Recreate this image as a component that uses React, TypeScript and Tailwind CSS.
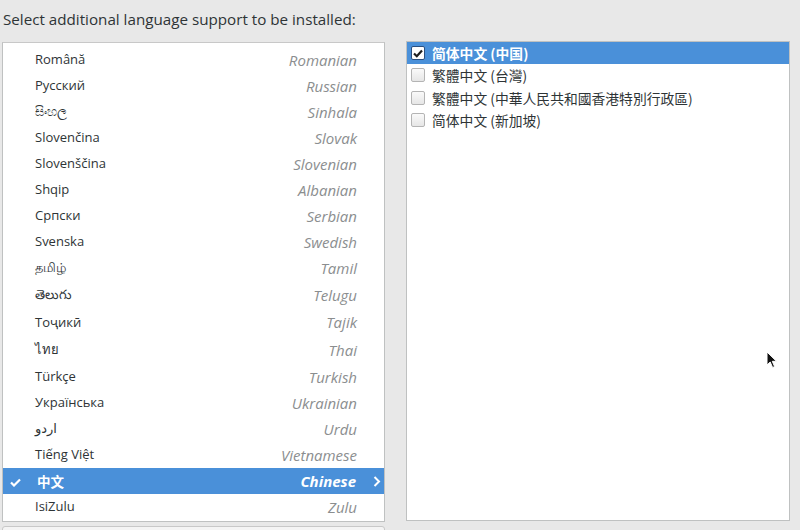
import React from "react";

type Lang = { native: string; en: string; h?: number; selected?: boolean };

const langs: Lang[] = [
  { native: "Română", en: "Romanian" },
  { native: "Русский", en: "Russian" },
  { native: "සිංහල", en: "Sinhala" },
  { native: "Slovenčina", en: "Slovak" },
  { native: "Slovenščina", en: "Slovenian" },
  { native: "Shqip", en: "Albanian" },
  { native: "Српски", en: "Serbian" },
  { native: "Svenska", en: "Swedish" },
  { native: "தமிழ்", en: "Tamil" },
  { native: "తెలుగు", en: "Telugu", h: 28 },
  { native: "Тоҷикӣ", en: "Tajik", h: 27 },
  { native: "ไทย", en: "Thai", h: 28 },
  { native: "Türkçe", en: "Turkish" },
  { native: "Українська", en: "Ukrainian" },
  { native: "اردو", en: "Urdu" },
  { native: "Tiếng Việt", en: "Vietnamese" },
  { native: "中文", en: "Chinese", selected: true },
  { native: "IsiZulu", en: "Zulu" },
];

const locales = [
  { t: "简体中文 (中国)", checked: true },
  { t: "繁體中文 (台灣)", checked: false },
  { t: "繁體中文 (中華人民共和國香港特別行政區)", checked: false },
  { t: "简体中文 (新加坡)", checked: false },
];

const FONT = "font-['Open_Sans','Noto_Sans','DejaVu_Sans','Noto_Sans_CJK_SC',sans-serif]";

function LangRow({ l }: { l: Lang }) {
  const h = l.h ?? 26;
  if (l.selected) {
    return (
      <div
        className="relative flex items-center bg-[#4a90d9] text-white"
        style={{ height: h }}
      >
        <svg className="absolute left-[7px] top-[10px]" width="11" height="9" viewBox="0 0 11 9">
          <path d="M1 4.5 L4 7.5 L10 1.5" fill="none" stroke="white" strokeWidth="2.2" />
        </svg>
        <span className="pl-[34px] text-[13.5px] font-bold font-['Noto_Sans_CJK_SC',sans-serif]">{l.native}</span>
        <span className="ml-auto pr-[28px] text-[15px] italic font-bold">{l.en}</span>
        <svg className="absolute right-[3px] top-[8px]" width="8" height="11" viewBox="0 0 8 11">
          <path d="M1.5 1 L6 5.5 L1.5 10" fill="none" stroke="white" strokeWidth="2" />
        </svg>
      </div>
    );
  }
  return (
    <div className="flex items-center" style={{ height: h }}>
      <span className="pl-[32px] text-[13px] text-[#2e3436]">{l.native}</span>
      <span className="ml-auto pr-[27px] text-[15px] italic text-[#8b8e8f]">{l.en}</span>
    </div>
  );
}

function Checkbox({ checked }: { checked: boolean }) {
  if (checked) {
    return (
      <div className="w-[14px] h-[14px] rounded-[2px] border border-[#2a4f80] bg-white flex items-center justify-center">
        <svg width="10" height="9" viewBox="0 0 10 9">
          <path d="M1 4.5 L3.8 7.2 L9 1.5" fill="none" stroke="#1e1e1e" strokeWidth="2.2" />
        </svg>
      </div>
    );
  }
  return (
    <div className="w-[14px] h-[14px] rounded-[2px] border border-[#b4b4b4] bg-gradient-to-b from-[#fafafa] to-[#e6e6e6]" />
  );
}

export default function App() {
  return (
    <div className={`relative w-[800px] h-[530px] bg-[#e8e8e8] overflow-hidden ${FONT}`}>
      <div className="pl-[3px] pt-[9px] h-[42px] text-[15.2px] text-[#2e3436] leading-[20px]">
        Select additional language support to be installed:
      </div>
      <div className="flex pl-[2px] gap-[21px]">
        <div className="flex flex-col">
          <div className="w-[383px] h-[480px] pt-[4px] bg-white border border-[#bfc1c1] border-t-[#c8c8c8] border-t-dashed overflow-hidden">
            {langs.map((l) => (
              <LangRow key={l.en} l={l} />
            ))}
          </div>
          <div className="mt-[4px] w-[383px] h-[20px] bg-[#f4f4f4] border border-[#c8c8c8] rounded-t-[3px]" />
        </div>
        <div className="w-[384px] h-[480px] mt-[-1px] bg-white border border-[#bfc1c1]">
          {locales.map((o, i) => (
            <div
              key={i}
              className={`flex items-center gap-[7px] pl-[4px] h-[22.3px] ${o.checked ? "bg-[#4a90d9] text-white font-bold" : "text-[#2e3436]"}`}
            >
              <Checkbox checked={o.checked} />
              <span className="text-[13.8px] leading-[18px] font-['Noto_Sans_CJK_SC','Noto_Sans',sans-serif]">{o.t}</span>
            </div>
          ))}
        </div>
      </div>
      <svg className="absolute left-[766px] top-[351px]" width="12" height="18" viewBox="0 0 12 18">
        <path d="M1 1 L1 14 L4.2 11 L6.6 16.5 L8.6 15.6 L6.3 10.3 L10.5 10.3 Z" fill="#111" stroke="white" strokeWidth="1" />
      </svg>
    </div>
  );
}
